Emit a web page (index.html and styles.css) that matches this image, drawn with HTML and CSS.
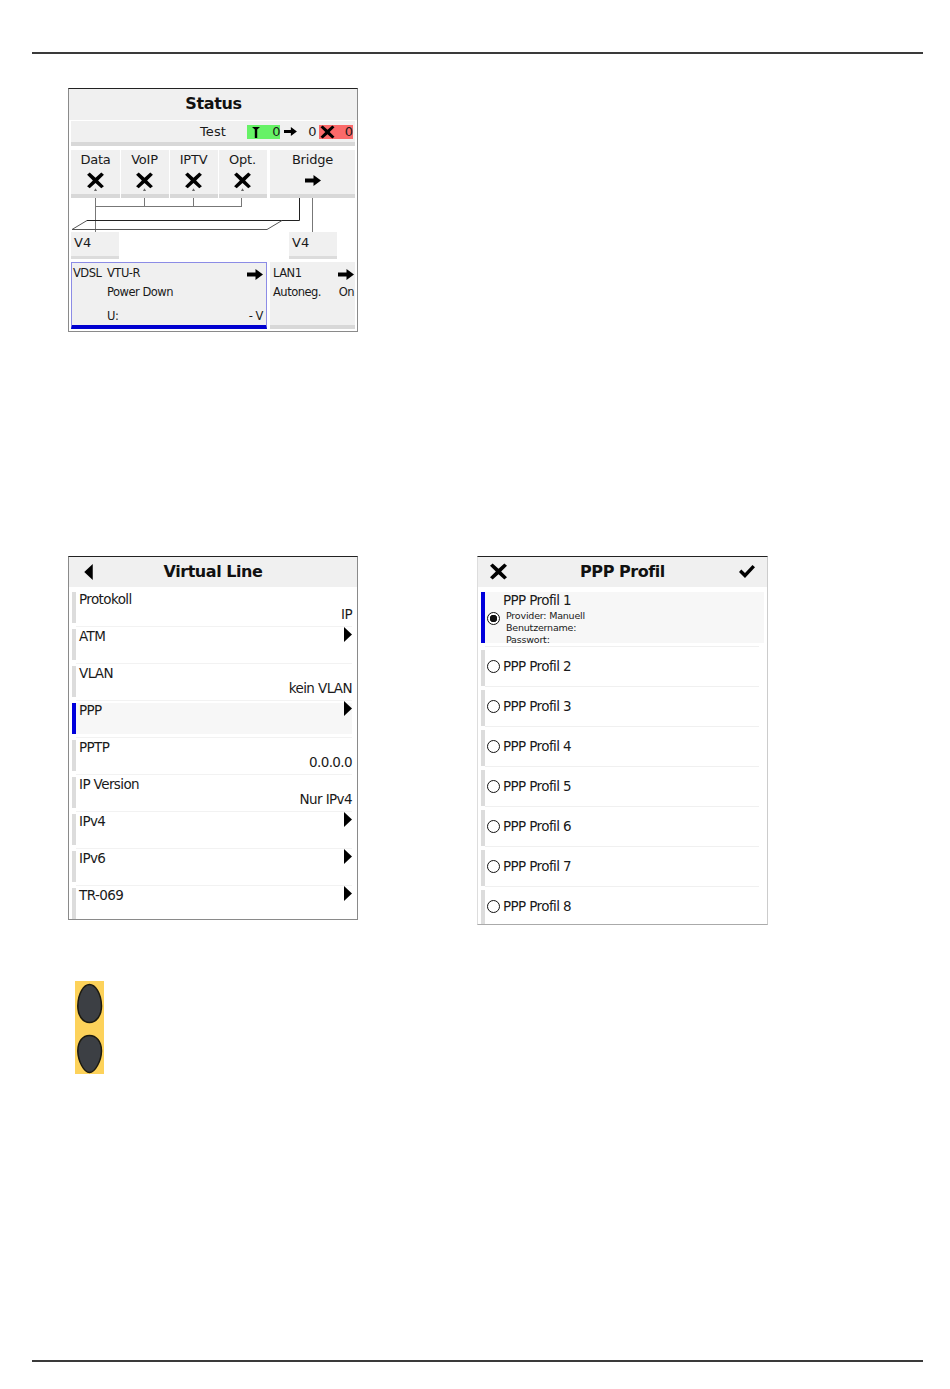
FILE: index.html
```html
<!DOCTYPE html>
<html lang="de">
<head>
<meta charset="utf-8">
<title>Status</title>
<link rel="stylesheet" href="styles.css">
</head>
<body>
<svg class="defs" width="0" height="0" aria-hidden="true">
  <symbol id="x" viewBox="0 0 16 16"><path d="M0 2.500 2.500 .5 8 5.500 13.500 .5 16 2.500 10.500 8 16 13.500 13.500 15.500 8 10.500 2.500 15.500 0 13.500 5.500 8Z"/></symbol>
  <symbol id="xc" viewBox="0 0 16 19"><path d="M0 2.500 2.500 .5 8 5.500 13.500 .5 16 2.500 10.500 8 16 13.500 13.500 15.500 8 10.500 2.500 15.500 0 13.500 5.500 8Z"/><path d="M6.500 18 8 15.500 9.500 18Z" fill="#666"/></symbol>
  <symbol id="arrow" viewBox="0 0 16 11"><path d="M0 3.500H8.500V0L16 5.500 8.500 11V7.500H0Z"/></symbol>
  <symbol id="tri" viewBox="0 0 8 15"><path d="M0 0 8 7.500 0 15Z"/></symbol>
</svg>
<main class="page">
  <hr class="rule">
  <section class="screen status">
    <h2 class="head head-status">Status</h2>
    <div class="test-row">
      <span class="test-label">Test</span>
      <span class="count ok"><svg class="up" viewBox="0 0 8 12"><path d="M0 1H8L5.200 3.500 5.200 12H2.800L2.800 3.500Z"/></svg><span>0</span></span>
      <svg class="arrow-sm"><use href="#arrow"/></svg>
      <span class="count plain">0</span>
      <span class="count bad"><svg class="x-sm"><use href="#x"/></svg><span>0</span></span>
    </div>
    <div class="tiles">
      <div class="tile w49"><span>Data</span><svg class="x-ico"><use href="#xc"/></svg></div>
      <div class="tile w48"><span>VoIP</span><svg class="x-ico"><use href="#xc"/></svg></div>
      <div class="tile w48"><span>IPTV</span><svg class="x-ico"><use href="#xc"/></svg></div>
      <div class="tile w48"><span>Opt.</span><svg class="x-ico"><use href="#xc"/></svg></div>
      <div class="tile bridge"><span>Bridge</span><svg class="arrow-ico"><use href="#arrow"/></svg></div>
    </div>
    <svg class="wires" width="290" height="34" viewBox="0 0 290 34">
      <g class="wire-grey">
        <path d="M26.500 0V34M26.500 8.500H173M75.500 0V8.500M124.500 0V8.500M172.500 0V8.500M243.500 0V34"/>
      </g>
      <path class="wire-dark" d="M230.500 0V22.500H18"/>
      <path class="wire-mid" d="M18 22.500 3 31.500H198L213 22.500"/>
    </svg>
    <div class="v-row">
      <div class="v-tile">V4</div>
      <div class="v-tile">V4</div>
    </div>
    <div class="ports">
      <div class="port vdsl">
        <div class="port-line"><span class="c-a">VDSL</span><span>VTU-R</span><svg class="arrow-ico port-arrow"><use href="#arrow"/></svg></div>
        <div class="port-line"><span class="c-a"></span><span>Power Down</span></div>
        <div class="port-line gap"><span class="c-a"></span><span>U:</span><span class="end">- V</span></div>
      </div>
      <div class="port lan">
        <div class="port-line"><span>LAN1</span><svg class="arrow-ico port-arrow"><use href="#arrow"/></svg></div>
        <div class="port-line"><span>Autoneg.</span><span class="end">On</span></div>
      </div>
    </div>
  </section>

  <div class="screens">
    <section class="screen menu">
      <header class="head"><svg class="back" viewBox="0 0 8 15"><path d="M8 0 0 7.500 8 15Z"/></svg><h2>Virtual Line</h2></header>
      <ul class="rows">
        <li class="row"><span>Protokoll</span><span class="val">IP</span></li>
        <li class="row"><span>ATM</span><svg class="tri"><use href="#tri"/></svg></li>
        <li class="row"><span>VLAN</span><span class="val">kein VLAN</span></li>
        <li class="row sel"><span>PPP</span><svg class="tri"><use href="#tri"/></svg></li>
        <li class="row"><span>PPTP</span><span class="val">0.0.0.0</span></li>
        <li class="row"><span>IP Version</span><span class="val">Nur IPv4</span></li>
        <li class="row"><span>IPv4</span><svg class="tri"><use href="#tri"/></svg></li>
        <li class="row"><span>IPv6</span><svg class="tri"><use href="#tri"/></svg></li>
        <li class="row"><span>TR-069</span><svg class="tri"><use href="#tri"/></svg></li>
      </ul>
    </section>

    <section class="screen profiles">
      <header class="head"><svg class="close"><use href="#x"/></svg><h2>PPP Profil</h2><svg class="check" viewBox="0 0 16 13"><path d="M0 7 2.300 4.500 6 8 13.500 0 16 2.300 6 13Z"/></svg></header>
      <ul class="plist">
        <li class="prow first sel"><span class="radio on"></span><div class="ptext"><span>PPP Profil 1</span><small>Provider: Manuell</small><small>Benutzername:</small><small>Passwort:</small></div></li>
        <li class="prow"><span class="radio"></span><span>PPP Profil 2</span></li>
        <li class="prow"><span class="radio"></span><span>PPP Profil 3</span></li>
        <li class="prow"><span class="radio"></span><span>PPP Profil 4</span></li>
        <li class="prow"><span class="radio"></span><span>PPP Profil 5</span></li>
        <li class="prow"><span class="radio"></span><span>PPP Profil 6</span></li>
        <li class="prow"><span class="radio"></span><span>PPP Profil 7</span></li>
        <li class="prow"><span class="radio"></span><span>PPP Profil 8</span></li>
      </ul>
    </section>
  </div>

  <div class="keys">
    <svg viewBox="0 0 29 93" width="29" height="93">
      <rect width="29" height="93" fill="#fdd25a"/>
      <path class="egg" d="M14.500 3.500C9 3.500 3 12 2.800 25C2.800 35 8 41.500 14.500 41.500C21 41.500 26.500 35 26.500 25C26.300 12 20 3.500 14.500 3.500Z"/>
      <path class="egg" d="M14.500 54.500C8 54.500 2.800 60 2.800 70C3 80 9 91.500 14.500 91.500C20 91.500 26.300 80 26.500 70C26.500 60 21 54.500 14.500 54.500Z"/>
    </svg>
  </div>
  <hr class="rule rule-bottom">
</main>
</body>
</html>
```
FILE: styles.css
```css
* { box-sizing: border-box; }
html, body { margin: 0; padding: 0; background: #fff; }
body { font-family: "DejaVu Sans", sans-serif; color: #1a1a1a; width: 950px; height: 1389px; overflow: hidden; }
.defs { position: absolute; }
.page { padding: 52px 27px 0 32px; }
.rule { margin: 0; border: 0; height: 2px; background: #3a3a3a; }
.rule-bottom { margin-top: 286px; }

.screen { width: 290px; background: #fff; border: 1px solid #8a8a8a; border-top-color: #222; }
.head { height: 30px; background: #f0f0f0; display: flex; align-items: center; justify-content: space-between; padding: 0 13px 0 14px; margin: 0; position: relative; color: #111; }
.head h2 { position: absolute; left: 0; right: 0; top: 0; margin: 0; text-align: center; font-size: 16px; font-weight: 700; line-height: 30px; letter-spacing: -.45px; }

/* Status screen */
.status { margin: 34px 0 0 36px; height: 244px; background: #fff; padding: 0 2px; position: relative; }
.head-status { display: block; height: 31px; margin: 0 -2px; font-size: 16px; font-weight: 700; line-height: 30px; text-align: center; letter-spacing: -.35px; }
.test-row { height: 25px; margin-top: 1px; background: #f0f0f0; border-bottom: 4px solid #d8d8d8; display: flex; align-items: center; font-size: 13px; padding: 0 2px 0 129px; }
.test-label { width: 47px; letter-spacing: .1px; }
.count { height: 14px; width: 34px; display: flex; align-items: center; justify-content: space-between; line-height: 14px; }
.count.ok { background: #66f266; padding-left: 5px; }
.count.bad { background: #fb6a6a; padding-left: 1px; }
.count.plain { width: 11px; }
.up { width: 8px; height: 12px; }
.arrow-sm { width: 13px; height: 9px; margin: 0 11px 0 4px; }
.x-sm { width: 15px; height: 14px; }
.tiles { display: flex; gap: 1px; margin-top: 4px; }
.tile { height: 48px; background: #f0f0f0; border-bottom: 4px solid #d8d8d8; display: flex; flex-direction: column; align-items: center; font-size: 13px; line-height: 15px; padding-top: 2px; letter-spacing: -.2px; }
.w49 { width: 49px; }
.w48 { width: 48px; }
.w48 .x-ico { margin-right: 1px; }
.w48 span { margin-right: 1px; }
.bridge { width: 85px; margin-left: 2px; }
.x-ico { width: 17px; height: 20px; margin-top: 5px; }
.arrow-ico { width: 16px; height: 11px; margin-top: 8px; }
.wires { display: block; margin: 0 -2px; height: 34px; overflow: visible; }
.wire-grey path { fill: none; stroke: #777; stroke-width: 1; }
.wire-dark { fill: none; stroke: #222; stroke-width: 1; }
.wire-mid { fill: none; stroke: #555; stroke-width: 1; }
.v-row { display: flex; justify-content: space-between; padding-right: 18px; }
.v-tile { width: 48px; height: 27px; background: #f0f0f0; border-bottom: 3px solid #dcdcdc; font-size: 13px; line-height: 22px; padding-left: 3px; }
.ports { display: flex; gap: 3px; margin-top: 3px; }
.port { height: 67px; background: #f0f0f0; font-size: 11.500px; line-height: 14px; letter-spacing: -.5px; }
.vdsl { width: 196px; border: 1px solid #8c8ce6; border-bottom: 4px solid #0000d0; padding: 3px 3px 0 1px; }
.lan { width: 85px; border-bottom: 4px solid #d8d8d8; padding: 4px 1px 0 3px; }
.port-line { display: flex; align-items: center; height: 14px; margin-bottom: 5px; }
.port-line.gap { margin-top: 10px; }
.c-a { width: 34px; }
.end { margin-left: auto; }
.port-arrow { margin: 2px 0 0 auto; }

/* Lists */
.screens { display: flex; gap: 119px; margin: 224px 0 0 36px; align-items: flex-start; }
.rows, .plist { list-style: none; margin: 0; padding: 0; }
.menu { height: 364px; overflow: hidden; }
.menu .head { padding-left: 15px; }
.rows { padding: 4px 5px 0 3px; }
.row { height: 37px; font-size: 13.500px; letter-spacing: -.6px; line-height: 15px; position: relative; padding: 1px 0 0 7px; display: flex; justify-content: space-between; align-items: flex-start; }
.row::before { content: ""; position: absolute; left: 0; top: 1px; width: 4px; height: 31px; background: #dcdcdc; }
.row::after { content: ""; position: absolute; left: 4px; right: 0; top: 35px; height: 1px; background: #f2f2f2; }
.row.sel { background: linear-gradient(#f7f7f7, #f7f7f7) 0 1px / 100% 31px no-repeat; }
.row.sel::before { background: #0000dc; }
.val { align-self: flex-start; margin-top: 15px; }
.tri { width: 8px; height: 15px; margin: -2px 0 0 0; }
.back { width: 9px; height: 16px; margin-top: -1px; }
.close { width: 17px; height: 17px; margin: -1px 0 0 -2px; }
.check { width: 16px; height: 13px; margin: -1px -1px 0 0; }
.profiles { width: 291px; height: 369px; overflow: hidden; border-left-color: #ddd; border-right-color: #ccc; border-bottom-color: #aaa; }
.plist { padding: 4px 3px 0 3px; }
.prow { height: 40px; font-size: 13.500px; letter-spacing: -.6px; position: relative; display: flex; align-items: center; padding: 0 0 0 6px; }
.prow::before { content: ""; position: absolute; left: 0; top: 4px; bottom: 0; width: 4px; background: #dcdcdc; }
.prow::after { content: ""; position: absolute; left: 4px; right: 5px; bottom: -1px; height: 1px; background: #f0f0f0; }
.prow.first { height: 55px; }
.prow.first::before { background: #0000dc; top: 1px; bottom: 3px; }
.prow.sel { background: linear-gradient(#f7f7f7, #f7f7f7) 0 1px / 100% 51px no-repeat; }
.radio { width: 13px; height: 13px; border: 1.800px solid #111; border-radius: 50%; background: #fff; margin-right: 3px; flex: none; }
.radio.on { background: radial-gradient(circle, #111 0 3.500px, #fff 4px); }
.ptext { display: flex; flex-direction: column; line-height: 15px; margin-top: 1px; }
.ptext small { font-size: 9.500px; line-height: 12px; margin-left: 3px; letter-spacing: -.2px; }
.ptext span + small { margin-top: 2px; }

.keys { margin: 56px 0 0 43px; }
.keys svg { display: block; }
.egg { fill: #3c3f44; stroke: #1c1a10; stroke-width: 1.500; }
```
